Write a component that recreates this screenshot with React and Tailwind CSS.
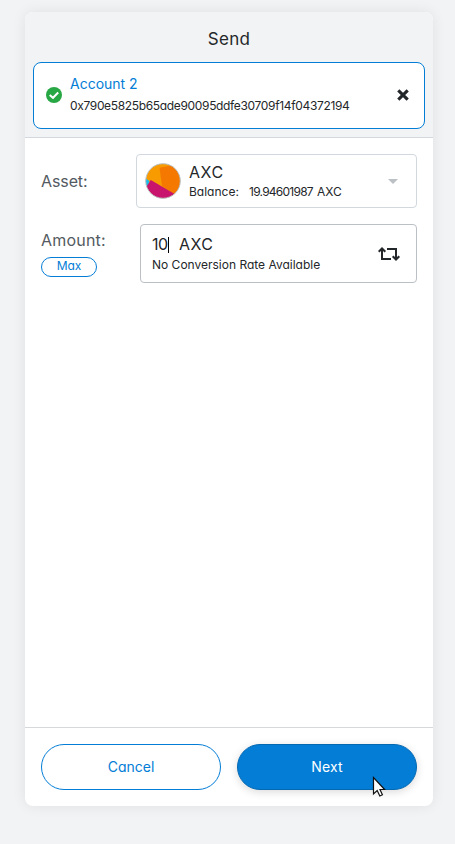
function CheckIcon() {
  return (
    <svg className="mb-0.5 block h-4 w-4 shrink-0" viewBox="0 0 16 16">
      <circle cx="8" cy="8" r="8" fill="#28a745" />
      <path d="M3.7 8 L7 10.8 L12.2 5.5" fill="none" stroke="#fff" strokeWidth="2" />
    </svg>
  );
}

function CloseIcon() {
  return (
    <svg className="mb-px block h-3 w-3 shrink-0" viewBox="0 0 12 12">
      <path d="M1.3 1.3 L10.7 10.7 M10.7 1.3 L1.3 10.7" stroke="#24272a" strokeWidth="3.1" />
    </svg>
  );
}

function SwapIcon() {
  return (
    <svg className="block h-[14px] w-[22px] shrink-0" viewBox="0 0 22 14" fill="none" stroke="#24272a" strokeWidth="2">
      <path d="M4 1.5 V12 H13" />
      <path d="M0.7 4.8 L4 1.5 L7.3 4.8" strokeWidth="2.1" />
      <path d="M9 2 H18 V12.5" />
      <path d="M14.7 9.2 L18 12.5 L21.3 9.2" strokeWidth="2.1" />
    </svg>
  );
}

function TokenAvatar() {
  return (
    <svg className="block h-9 w-9 shrink-0" viewBox="0 0 36 36">
      <defs>
        <clipPath id="token">
          <circle cx="18" cy="18" r="17.2" />
        </clipPath>
      </defs>
      <g clipPath="url(#token)">
        <rect width="36" height="36" fill="#f79b00" />
        <path d="M14.5 4.8 L29 2 L40 20 L30 32 L17 23 Z" fill="#f57800" />
        <path d="M0 15 L4.5 18 L2 26 H0 Z" fill="#18bdf0" />
        <path d="M5.8 17 L30.5 31.5 L22 40 H0 V26 Z" fill="#c8146c" />
      </g>
      <circle cx="18" cy="18" r="17.3" fill="none" stroke="#b9c0c4" strokeWidth="1" />
    </svg>
  );
}

function Cursor() {
  return (
    <svg className="absolute top-[32px] left-[135px] h-[22px] w-[14px]" viewBox="0 0 14 22">
      <path d="M1.5 1.5 V18 L5.2 14.6 L7.8 20 L10.4 18.8 L8 13.5 H12.6 Z" fill="#fff" stroke="#111" strokeWidth="1.2" />
    </svg>
  );
}

export default function App() {
  return (
    <div className="flex h-[844px] w-[455px] flex-col bg-[#f2f3f4] px-[25px] pt-3 pb-[38px] font-['Inter',sans-serif] whitespace-nowrap text-[#24272a] [font-feature-settings:'cv11']">
      <div className="flex w-[408px] flex-1 flex-col overflow-visible rounded-lg bg-white shadow-[0_0_14px_rgba(0,0,0,0.08)]">
        <header className="h-[126px] rounded-t-lg border-b border-[#d2d8dd] bg-[#f2f3f4] px-2">
          <h1 className="flex h-[50px] items-center justify-center pt-[6px] text-[17px] tracking-[0.3px]">Send</h1>
          <div className="flex h-[67px] items-center rounded-lg border border-[#037dd6] bg-white pr-[15px] pl-3">
            <CheckIcon />
            <div className="ml-2 flex-1">
              <div className="text-[14px] leading-[21px] text-[#037dd6]">Account 2</div>
              <div className="text-[12px] leading-[24px] tracking-[-0.34px]">0x790e5825b65ade90095ddfe30709f14f04372194</div>
            </div>
            <CloseIcon />
          </div>
        </header>

        <main className="flex-1 px-4 pt-4">
          <div className="flex h-[54px] items-center">
            <div className="w-[95px] pb-px text-[16px] tracking-[-0.1px] text-[#535a61]">Asset:</div>
            <div className="flex h-[54px] flex-1 items-center rounded border border-[#d2d8dd] pr-[18px] pl-2">
              <TokenAvatar />
              <div className="ml-2 flex-1 pt-px">
                <div className="text-[16px] leading-5 tracking-[0.5px]">AXC</div>
                <div className="flex text-[12px] leading-5">
                  <span className="w-[60px]">Balance:</span>
                  <span className="w-[68px] tracking-[-0.75px]">19.94601987</span>
                  <span>AXC</span>
                </div>
              </div>
              <svg className="block h-[5px] w-[10px]" viewBox="0 0 10 5"><path d="M0 0 H10 L5 5 Z" fill="#bbc0c5" /></svg>
            </div>
          </div>

          <div className="mt-4 flex h-[59px]">
            <div className="w-[99px]">
              <div className="pt-[5px] text-[16px] leading-[22px] tracking-[0.2px] text-[#535a61]">Amount:</div>
              <button className="mt-[6px] flex h-5 w-14 items-center justify-center rounded-full border border-[#037dd6] pb-[2px] text-[12px] text-[#037dd6]">Max</button>
            </div>
            <div className="flex flex-1 items-center rounded border border-[#bbc0c5] pr-4 pl-[11px]">
              <div className="flex-1 pt-[2px]">
                <div className="flex items-center text-[16px] leading-[21px]">
                  <span className="w-4 tracking-[-0.6px]">10</span>
                  <span className="h-4 w-px bg-black" />
                  <span className="ml-[10px] tracking-[0.4px]">AXC</span>
                </div>
                <div className="text-[12px] leading-5">No Conversion Rate Available</div>
              </div>
              <SwapIcon />
            </div>
          </div>
        </main>

        <footer className="flex h-[79px] gap-4 border-t border-[#d6d9dc] px-4 pt-4 text-[14px]">
          <button className="h-[46px] w-[180px] rounded-full border border-[#037dd6] pb-[2px] text-[#037dd6]">Cancel</button>
          <div className="relative h-[46px] w-[180px]">
            <button className="h-[46px] w-[180px] rounded-full border border-[#0569b2] bg-[#037dd6] pb-[2px] tracking-[0.2px] text-white shadow-[0_2px_8px_rgba(0,0,0,0.15)]">Next</button>
            <Cursor />
          </div>
        </footer>
      </div>
    </div>
  );
}
